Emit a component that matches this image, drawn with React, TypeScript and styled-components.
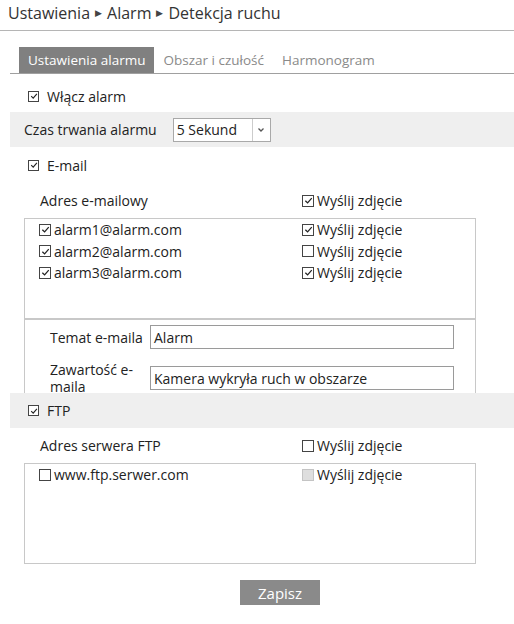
import React, { FC } from 'react';
import styled, { createGlobalStyle } from 'styled-components';

const GlobalStyle = createGlobalStyle`
  body {
    margin: 0;
    background: #ffffff;
    font-family: "Open Sans", "Liberation Sans", sans-serif;
    color: #222222;
  }
`;

const Page = styled.div`
  width: 514px;
  height: 624px;
  overflow: hidden;
`;

const Breadcrumb = styled.div`
  height: 31px;
  border-bottom: 1px solid #b5b5b5;
  display: flex;
  align-items: center;
  padding: 0 0 5px 8px;
  box-sizing: border-box;
  font-size: 16px;
  color: #333333;
  gap: 5px;
`;

const Arrow = styled.span`
  font-size: 9px;
  color: #444444;
`;

const Content = styled.div`
  margin-left: 10px;
`;

const TabBar = styled.div`
  margin-top: 16px;
  height: 26px;
  display: flex;
  padding-left: 9px;
  border-bottom: 1px solid #a0a0a0;
`;

const Tab = styled.div<{ active?: boolean }>`
  height: 26px;
  display: flex;
  align-items: center;
  padding: 0 9px;
  font-size: 13.5px;
  background: ${p => (p.active ? '#808080' : 'transparent')};
  color: ${p => (p.active ? '#ffffff' : '#8a8a8a')};
`;

const CheckRow = styled.div<{ height: number; top?: number; band?: boolean }>`
  height: ${p => p.height}px;
  padding-top: ${p => p.top || 0}px;
  box-sizing: border-box;
  display: flex;
  align-items: center;
  padding-left: 18px;
  gap: 8px;
  font-size: 14px;
  background: ${p => (p.band ? '#efefef' : 'transparent')};
`;

const Band = styled.div`
  height: 35px;
  background: #efefef;
  display: flex;
  align-items: center;
  padding-left: 14px;
  font-size: 14px;
  gap: 16px;
`;

const Select = styled.div`
  width: 98px;
  height: 24px;
  box-sizing: border-box;
  border: 1px solid #a9a9a9;
  background: #ffffff;
  display: flex;
  align-items: center;
  font-size: 14px;
`;

const SelectValue = styled.span`
  flex: 1;
  padding-left: 3px;
`;

const SelectArrow = styled.span`
  width: 17px;
  height: 22px;
  border-left: 1px solid #cccccc;
  display: flex;
  align-items: center;
  justify-content: center;
`;

const Boxed = styled.div`
  margin-left: 14px;
  width: 452px;
`;

const HeadRow = styled.div`
  height: 35px;
  display: grid;
  grid-template-columns: 262px 1fr;
  align-items: center;
  padding-left: 16px;
  font-size: 14px;
`;

const ListBox = styled.div<{ height: number }>`
  height: ${p => p.height}px;
  box-sizing: border-box;
  border: 1px solid #c8c8c8;
  padding: 0 0 0 14px;
`;

const ListRow = styled.div`
  height: 21.5px;
  display: grid;
  grid-template-columns: 263px 1fr;
  align-items: center;
  font-size: 14px;
`;

const Cell = styled.label`
  display: flex;
  align-items: center;
  gap: 3px;
`;

const MailBox = styled.div`
  height: 75px;
  box-sizing: border-box;
  border: 1px solid #c8c8c8;
  border-top-width: 2px;
  border-bottom: none;
  margin-top: -1px;
  padding: 5px 0 0 25px;
  display: flex;
  flex-direction: column;
  gap: 12px;
`;

const FieldRow = styled.div`
  display: flex;
  align-items: center;
  font-size: 14px;
`;

const FieldLabel = styled.span`
  width: 100px;
  line-height: 17px;
`;

const TextInput = styled.div`
  width: 304px;
  height: 24px;
  box-sizing: border-box;
  border: 1px solid #9a9a9a;
  display: flex;
  align-items: center;
  padding-left: 3px;
  font-size: 14px;
`;

const Footer = styled.div`
  display: flex;
  padding-top: 16px;
  padding-left: 230px;
`;

const Button = styled.button`
  width: 80px;
  height: 25px;
  border: none;
  background: #8a8a8a;
  color: #ffffff;
  font-family: "Open Sans", "Liberation Sans", sans-serif;
  font-size: 15px;
  padding: 0;
`;

const Box = styled.span<{ size: number; disabled?: boolean }>`
  width: ${p => p.size}px;
  height: ${p => p.size}px;
  box-sizing: border-box;
  border: 1px solid ${p => (p.disabled ? '#c4c4c4' : '#444444')};
  background: ${p => (p.disabled ? '#dedede' : '#ffffff')};
  display: inline-flex;
  align-items: center;
  justify-content: center;
  flex-shrink: 0;
`;

const Check: FC<{ on?: boolean; size?: number; disabled?: boolean }> = ({ on, size = 12, disabled }) => (
  <Box size={size} disabled={disabled}>
    {on && (
      <svg width={size - 3} height={size - 3} viewBox="0 0 10 10">
        <path d="M1.5 5.2 L4 7.6 L8.6 2.4" fill="none" stroke="#222" strokeWidth="1.4" />
      </svg>
    )}
  </Box>
);

const emails = [
  { addr: 'alarm1@alarm.com', photo: true },
  { addr: 'alarm2@alarm.com', photo: false },
  { addr: 'alarm3@alarm.com', photo: true },
];

const App: FC = () => (
  <Page>
    <GlobalStyle />
    <Breadcrumb>
      <span>Ustawienia</span>
      <Arrow>▶</Arrow>
      <span>Alarm</span>
      <Arrow>▶</Arrow>
      <span>Detekcja ruchu</span>
    </Breadcrumb>
    <Content>
      <TabBar>
        <Tab active>Ustawienia alarmu</Tab>
        <Tab>Obszar i czułość</Tab>
        <Tab>Harmonogram</Tab>
      </TabBar>
      <CheckRow height={38} top={6}>
        <Check on size={11} />
        <span>Włącz alarm</span>
      </CheckRow>
      <Band>
        <span>Czas trwania alarmu</span>
        <Select>
          <SelectValue>5 Sekund</SelectValue>
          <SelectArrow>
            <svg width="8" height="6" viewBox="0 0 8 6">
              <path d="M1.5 1.5 L4 4 L6.5 1.5" fill="none" stroke="#555" strokeWidth="1.3" />
            </svg>
          </SelectArrow>
        </Select>
      </Band>
      <CheckRow height={36}>
        <Check on size={11} />
        <span>E-mail</span>
      </CheckRow>
      <Boxed>
        <HeadRow>
          <span>Adres e-mailowy</span>
          <Cell>
            <Check on />
            <span>Wyślij zdjęcie</span>
          </Cell>
        </HeadRow>
        <ListBox height={101}>
          {emails.map(e => (
            <ListRow key={e.addr}>
              <Cell>
                <Check on />
                <span>{e.addr}</span>
              </Cell>
              <Cell>
                <Check on={e.photo} />
                <span>Wyślij zdjęcie</span>
              </Cell>
            </ListRow>
          ))}
        </ListBox>
        <MailBox>
          <FieldRow>
            <FieldLabel>Temat e-maila</FieldLabel>
            <TextInput>Alarm</TextInput>
          </FieldRow>
          <FieldRow>
            <FieldLabel>Zawartość e-maila</FieldLabel>
            <TextInput>Kamera wykryła ruch w obszarze</TextInput>
          </FieldRow>
        </MailBox>
      </Boxed>
      <CheckRow height={35} band>
        <Check on size={11} />
        <span>FTP</span>
      </CheckRow>
      <Boxed>
        <HeadRow>
          <span>Adres serwera FTP</span>
          <Cell>
            <Check />
            <span>Wyślij zdjęcie</span>
          </Cell>
        </HeadRow>
        <ListBox height={101}>
          <ListRow>
            <Cell>
              <Check />
              <span>www.ftp.serwer.com</span>
            </Cell>
            <Cell>
              <Check disabled />
              <span>Wyślij zdjęcie</span>
            </Cell>
          </ListRow>
        </ListBox>
      </Boxed>
      <Footer>
        <Button>Zapisz</Button>
      </Footer>
    </Content>
  </Page>
);

export default App;
